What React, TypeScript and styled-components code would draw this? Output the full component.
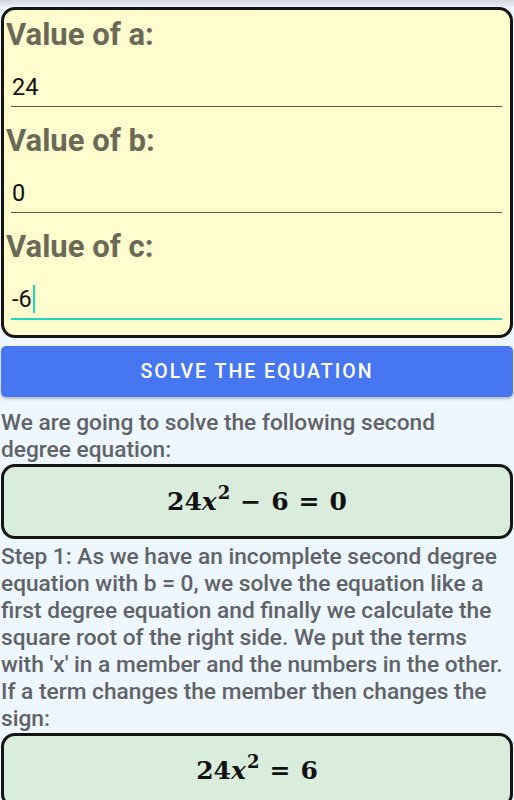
import styled, { createGlobalStyle } from "styled-components";

const GlobalStyle = createGlobalStyle`
    html, body {
        margin: 0;
        padding: 0;
        background-color: #EEF6FE;
        font-family: Roboto, "Noto Sans", sans-serif;
    }
`;

const Page = styled.div`
    width: 514px;
    min-height: 800px;
    overflow: hidden;
    background-color: #EEF6FE;
`;

const TopShade = styled.div`
    height: 7px;
    background: linear-gradient(#d3d7dd, #e9eff7);
`;

const Content = styled.div`
    padding: 0 1px 0 1px;
    display: flex;
    flex-direction: column;
`;

const InputCard = styled.div`
    border: 3px solid #151515;
    border-radius: 14px;
    background-color: #FFFDCD;
    padding: 5px 0 2px 0;
    display: flex;
    flex-direction: column;
`;

const Label = styled.label`
    display: block;
    padding-left: 2px;
    font-size: 31px;
    line-height: 40px;
    font-weight: 700;
    color: #6B6A59;
`;

const ValueInput = styled.div<{ $focused?: boolean }>`
    display: flex;
    align-items: center;
    height: ${p => (p.$focused ? 41 : 40)}px;
    margin: 12px 8px ${p => (p.$focused ? 13 : 14)}px 7px;
    padding-left: 1px;
    box-sizing: border-box;
    border-bottom: ${p => (p.$focused ? "2px solid #1FD8C1" : "1px solid #5a5a52")};
    font-size: 23.5px;
    color: #111;
`;

const Caret = styled.span`
    display: inline-block;
    width: 2px;
    height: 28px;
    margin-left: 1px;
    background-color: #1FD8C1;
`;

const SolveButton = styled.button`
    margin-top: 8px;
    height: 51px;
    border: none;
    border-radius: 5px;
    background-color: #4677F0;
    color: #fff;
    font-family: Roboto, sans-serif;
    font-size: 19.5px;
    font-weight: 500;
    letter-spacing: 2px;
    text-transform: uppercase;
    box-shadow: 0 2px 3px rgba(0, 0, 0, 0.25);
`;

const Text = styled.p<{ $top?: number; $inset?: number }>`
    margin: ${p => p.$top ?? 12}px 0 1px 0;
    padding-right: ${p => p.$inset ?? 0}px;
    font-size: 22.7px;
    line-height: 27px;
    font-weight: 500;
    color: #606367;
`;

const EquationBox = styled.div`
    height: 75px;
    box-sizing: border-box;
    border: 3px solid #151515;
    border-radius: 14px;
    background-color: #DAECDB;
    display: flex;
    align-items: center;
    justify-content: center;
`;

const MathRow = styled.span`
    font-family: "DejaVu Serif", "Liberation Serif", serif;
    font-weight: 700;
    font-size: 25px;
    color: #111;
    white-space: nowrap;
`;

const Var = styled.i`
    font-style: italic;
`;

const Sup = styled.sup`
    font-size: 18px;
    vertical-align: 11px;
    line-height: 0;
    margin-left: 1px;
`;

const Op = styled.span`
    margin: 0 10px;
`;

const fields = [
    { name: "a", value: "24" },
    { name: "b", value: "0" },
    { name: "c", value: "-6", focused: true },
];

const App = () => {
    return (
        <Page>
            <GlobalStyle />
            <TopShade />
            <Content>
                <InputCard>
                    {fields.map(f => (
                        <div key={f.name}>
                            <Label>Value of {f.name}:</Label>
                            <ValueInput $focused={f.focused}>
                                {f.value}
                                {f.focused && <Caret />}
                            </ValueInput>
                        </div>
                    ))}
                </InputCard>
                <SolveButton>Solve the equation</SolveButton>
                <Text $inset={16}>We are going to solve the following second degree equation:</Text>
                <EquationBox>
                    <MathRow>
                        24<Var>x</Var><Sup>2</Sup><Op>−</Op>6<Op>=</Op>0
                    </MathRow>
                </EquationBox>
                <Text $top={4}>
                    Step 1: As we have an incomplete second degree equation with b = 0, we solve the equation like a
                    first degree equation and finally we calculate the square root of the right side. We put the terms
                    with 'x' in a member and the numbers in the other. If a term changes the member then changes the sign:
                </Text>
                <EquationBox>
                    <MathRow>
                        24<Var>x</Var><Sup>2</Sup><Op>=</Op>6
                    </MathRow>
                </EquationBox>
            </Content>
        </Page>
    );
};

export default App;
